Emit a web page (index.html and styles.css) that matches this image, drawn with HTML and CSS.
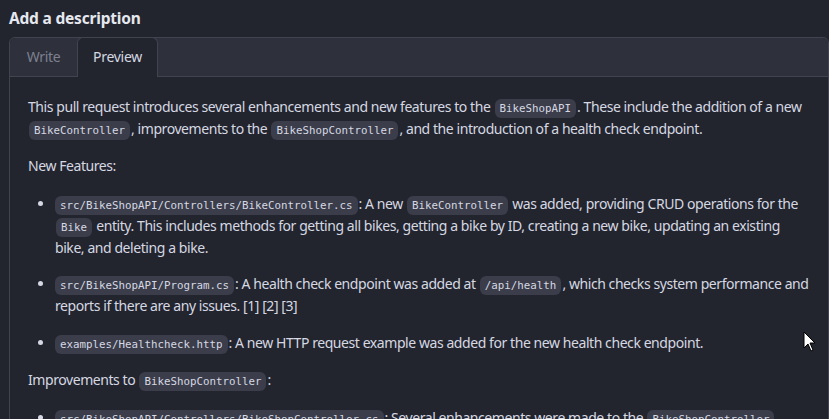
FILE: index.html
```html
<!DOCTYPE html>
<html lang="en">
<head>
<meta charset="utf-8">
<title>Add a description</title>
<link rel="stylesheet" href="styles.css">
</head>
<body>
<h2 class="title">Add a description</h2>
<div class="editor">
  <div class="tabs">
    <div class="tab">Write</div>
    <div class="tab active">Preview</div>
  </div>
  <div class="preview">
    <p>This pull request introduces several enhancements and new features to the <code>BikeShopAPI</code>. These include the addition of a new <code>BikeController</code>, improvements to the <code>BikeShopController</code>, and the introduction of a health check endpoint.</p>
    <p>New Features:</p>
    <ul>
      <li><code>src/BikeShopAPI/Controllers/BikeController.cs</code>: A new <code>BikeController</code> was added, providing CRUD operations for the <code>Bike</code> entity. This includes methods for getting all bikes, getting a bike by ID, creating a new bike, updating an existing bike, and deleting a bike.</li>
      <li><code>src/BikeShopAPI/Program.cs</code>: A health check endpoint was added at <code>/api/health</code>, which checks system performance and reports if there are any issues. [1] [2] [3]</li>
      <li><code>examples/Healthcheck.http</code>: A new HTTP request example was added for the new health check endpoint.</li>
    </ul>
    <p>Improvements to <code>BikeShopController</code>:</p>
    <ul>
      <li><code>src/BikeShopAPI/Controllers/BikeShopController.cs</code>: Several enhancements were made to the <code>BikeShopController</code>, including improved error handling and validation.</li>
    </ul>
  </div>
</div>
<svg class="cursor" width="14" height="22" viewBox="0 0 14 22"><path d="M1 1 L1 17 L5 13 L8 20 L10 19 L7 12 L12 12 Z" fill="#fff" stroke="#000" stroke-width="1"/></svg>
</body>
</html>
```
FILE: styles.css
```css
html, body {
  margin: 0;
  padding: 0;
  background: #23252e;
  overflow: hidden;
}
body {
  font-family: "Noto Sans", "Open Sans", sans-serif;
  color: #d5d8e2;
  font-size: 14px;
  padding: 0 0 0 9px;
  width: 829px;
  height: 419px;
  box-sizing: border-box;
}
.title {
  margin: 0;
  padding-top: 6px;
  height: 37px;
  box-sizing: border-box;
  font-size: 15.5px;
  font-weight: 700;
  line-height: 24px;
  color: #e6e8ef;
  letter-spacing: -0.2px;
}
.editor {
  border: 1px solid #41434f;
  border-radius: 6px;
  width: 820px;
  box-sizing: border-box;
}
.tabs {
  display: flex;
  background: #2e303b;
  border-bottom: 1px solid #41434f;
  border-radius: 6px 6px 0 0;
  height: 39px;
  box-sizing: border-box;
}
.tab {
  width: 67px;
  text-align: center;
  line-height: 38px;
  color: #7d8190;
  font-size: 14px;
  letter-spacing: -0.3px;
}
.tab.active {
  width: 81px;
  background: #23252e;
  color: #d5d8e2;
  border: 1px solid #41434f;
  border-bottom: none;
  border-radius: 6px 6px 0 0;
  margin: -1px 0 -1px 0;
  height: 40px;
  box-sizing: border-box;
}
.preview {
  padding: 9px 18px 0 18px;
  line-height: 21.7px;
  letter-spacing: -0.43px;
}
.preview p {
  margin: 10px 0 16px 0;
}
.preview ul {
  margin: 0 0 16px 0;
  padding-left: 27px;
}
.preview li {
  margin-bottom: 15px;
}
code {
  font-family: "DejaVu Sans Mono", "Liberation Mono", monospace;
  font-size: 10.8px;
  line-height: 1;
  letter-spacing: 0;
  background: #3b3d4a;
  border-radius: 6px;
  padding: 3px 5px;
  margin: 0 1px;
  color: #d5d8e2;
}
li > code:first-child {
  margin-left: 0;
}
.cursor {
  position: absolute;
  left: 803px;
  top: 331px;
}
```
